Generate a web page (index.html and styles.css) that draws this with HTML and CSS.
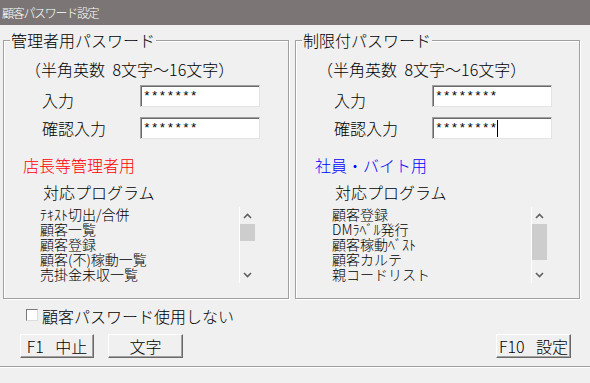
FILE: index.html
```html
<!DOCTYPE html>
<html lang="ja">
  <head>
    <meta charset="UTF-8" />
    <title>顧客パスワード設定</title>
    <link rel="stylesheet" href="styles.css">
  </head>
  <body>
    <div class="titlebar">顧客パスワード設定</div>

    <div class="groups">
      <div class="group">
        <div class="group-title">管理者用パスワード</div>
        <div class="hint">（半角英数 8文字～16文字）</div>
        <div class="field-row">
          <span class="field-label">入力</span>
          <div class="field">*******</div>
        </div>
        <div class="field-row">
          <span class="field-label">確認入力</span>
          <div class="field">*******</div>
        </div>
        <div class="role admin">店長等管理者用</div>
        <div class="programs-title">対応プログラム</div>
        <div class="listbox">
          <ul class="list-items">
            <li>ﾃｷｽﾄ切出/合併</li>
            <li>顧客一覧</li>
            <li>顧客登録</li>
            <li>顧客(不)稼動一覧</li>
            <li>売掛金未収一覧</li>
          </ul>
          <div class="scrollbar">
            <span class="arrow"><svg width="9" height="6" viewBox="0 0 9 6"><path d="M1 5 L4.5 1.5 L8 5" /></svg></span>
            <div class="track"><div class="thumb" style="height: 17px"></div></div>
            <span class="arrow"><svg width="9" height="6" viewBox="0 0 9 6"><path d="M1 1 L4.5 4.5 L8 1" /></svg></span>
          </div>
        </div>
      </div>

      <div class="group group-right">
        <div class="group-title">制限付パスワード</div>
        <div class="hint">（半角英数 8文字～16文字）</div>
        <div class="field-row">
          <span class="field-label">入力</span>
          <div class="field">********</div>
        </div>
        <div class="field-row">
          <span class="field-label">確認入力</span>
          <div class="field">********<span class="caret"></span></div>
        </div>
        <div class="role staff">社員・バイト用</div>
        <div class="programs-title">対応プログラム</div>
        <div class="listbox">
          <ul class="list-items">
            <li>顧客登録</li>
            <li>DMﾗﾍﾞﾙ発行</li>
            <li>顧客稼動ﾍﾞｽﾄ</li>
            <li>顧客カルテ</li>
            <li>親コードリスト</li>
          </ul>
          <div class="scrollbar">
            <span class="arrow"><svg width="9" height="6" viewBox="0 0 9 6"><path d="M1 5 L4.5 1.5 L8 5" /></svg></span>
            <div class="track"><div class="thumb" style="height: 36px"></div></div>
            <span class="arrow"><svg width="9" height="6" viewBox="0 0 9 6"><path d="M1 1 L4.5 4.5 L8 1" /></svg></span>
          </div>
        </div>
      </div>
    </div>

    <div class="check-row">
      <span class="checkbox"></span>
      <span class="check-label">顧客パスワード使用しない</span>
    </div>

    <div class="buttons">
      <button class="btn">F1 中止</button>
      <button class="btn">文字</button>
      <button class="btn btn-save">F10 設定</button>
    </div>

    <div class="statusline"></div>
  </body>
</html>
```

FILE: styles.css
```css
body {
  margin: 0;
  width: 590px;
  height: 383px;
  overflow: hidden;
  background: #f0f0f0;
  font-family: "Noto Sans CJK JP", sans-serif;
  font-size: 16px;
  font-weight: 300;
  color: #000;
}
.titlebar {
  height: 25px;
  line-height: 25px;
  padding-left: 2px;
  background: #7b7675;
  color: #fff;
  font-size: 12px;
  letter-spacing: -1.3px;
}
.groups {
  display: flex;
  gap: 6px;
  margin-top: 15px;
  padding-left: 3px;
}
.group {
  width: 286px;
  height: 259px;
  box-sizing: border-box;
  border: 1px solid #a0a0a0;
  box-shadow: 1px 1px 0 #fff, inset 1px 1px 0 #fff;
}
.group-right {
  width: 285px;
}
.group-title {
  display: table;
  margin: -11px 0 0 6px;
  padding: 0 1px;
  line-height: 20px;
  background: #f0f0f0;
}
.hint {
  margin: 9px 0 0 21px;
  line-height: 20px;
  word-spacing: 4px;
}
.field-row {
  display: flex;
  height: 22px;
  margin: 6px 0 0 38px;
}
.field-row + .field-row {
  margin-top: 10px;
}
.field-label {
  width: 98px;
  padding-top: 5px;
  line-height: 20px;
}
.field-row + .field-row .field-label {
  padding-top: 1px;
}
.field {
  width: 120px;
  height: 22px;
  box-sizing: border-box;
  padding: 2px 0 0 2px;
  border: 1px solid;
  border-color: #a0a0a0 #e3e3e3 #e3e3e3 #a0a0a0;
  box-shadow: inset 1px 1px 0 #696969;
  background: #fff;
  font-family: "Liberation Mono", monospace;
  font-size: 13px;
  font-weight: 400;
  line-height: 18px;
}
.caret {
  display: inline-block;
  width: 1px;
  height: 17px;
  background: #000;
  vertical-align: top;
}
.role {
  margin: 16px 0 0 19px;
  line-height: 20px;
}
.role.admin {
  color: #ff0000;
}
.role.staff {
  color: #0000ff;
}
.programs-title {
  margin: 7px 0 0 39px;
  line-height: 20px;
}
.listbox {
  display: flex;
  height: 76px;
  margin: 5px 0 0 36px;
}
.list-items {
  width: 199px;
  margin: 0;
  padding: 0;
  list-style: none;
  font-size: 14px;
  line-height: 15px;
}
.scrollbar {
  width: 15px;
  border-left: 1px solid #fff;
  display: flex;
  flex-direction: column;
}
.arrow {
  height: 17px;
  display: flex;
  align-items: center;
  justify-content: center;
}
.arrow svg path {
  fill: none;
  stroke: #606060;
  stroke-width: 1.6;
}
.track {
  flex: 1;
}
.thumb {
  background: #cdcdcd;
}
.check-row {
  display: flex;
  height: 20px;
  margin-top: 7px;
  padding-left: 26px;
  line-height: 20px;
}
.checkbox {
  width: 12px;
  height: 12px;
  box-sizing: border-box;
  margin-top: 3px;
  border: 1px solid;
  border-color: #7a7a7a #dcdcdc #dcdcdc #7a7a7a;
  background: #fff;
}
.check-label {
  margin-left: 4px;
}
.buttons {
  display: flex;
  gap: 14px;
  margin-top: 8px;
  padding: 0 19px 0 20px;
}
.btn {
  width: 74px;
  height: 24px;
  box-sizing: border-box;
  padding: 0;
  border: 1px solid;
  border-color: #fff #696969 #696969 #fff;
  box-shadow: inset -1px -1px 0 #a0a0a0;
  background: #f0f0f0;
  font-family: inherit;
  font-size: 16px;
  font-weight: 300;
  line-height: 20px;
  word-spacing: 8px;
  color: #000;
}
.btn + .btn {
  width: 75px;
}
.btn-save {
  width: 74px;
  margin-left: auto;
}
.statusline {
  margin-top: 8px;
  border-top: 1px solid #a0a0a0;
  border-bottom: 1px solid #fff;
}
```
